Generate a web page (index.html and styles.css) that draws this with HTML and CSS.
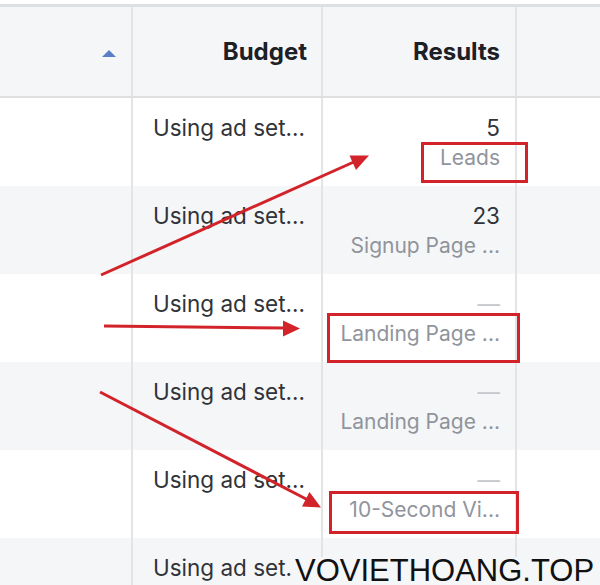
FILE: index.html
```html
<!DOCTYPE html>
<html lang="en">
  <head>
    <meta charset="UTF-8" />
    <meta name="viewport" content="width=device-width, initial-scale=1.0" />
    <title>Ad Sets - Results</title>
    <link rel="stylesheet" href="styles.css">
  </head>
  <body>
    <div class="page">
      <div class="table">
        <div class="row head">
          <div class="cell name"><span class="sort-up"></span></div>
          <div class="cell budget">Budget</div>
          <div class="cell results">Results</div>
          <div class="cell extra"></div>
        </div>

        <div class="row">
          <div class="cell name"></div>
          <div class="cell budget">Using ad set...</div>
          <div class="cell results">
            <div class="value">5</div>
            <div class="type">Leads</div>
          </div>
          <div class="cell extra"></div>
        </div>
        <div class="row alt">
          <div class="cell name"></div>
          <div class="cell budget">Using ad set...</div>
          <div class="cell results">
            <div class="value">23</div>
            <div class="type">Signup Page ...</div>
          </div>
          <div class="cell extra"></div>
        </div>
        <div class="row">
          <div class="cell name"></div>
          <div class="cell budget">Using ad set...</div>
          <div class="cell results">
            <div class="value empty">—</div>
            <div class="type">Landing Page ...</div>
          </div>
          <div class="cell extra"></div>
        </div>
        <div class="row alt">
          <div class="cell name"></div>
          <div class="cell budget">Using ad set...</div>
          <div class="cell results">
            <div class="value empty">—</div>
            <div class="type">Landing Page ...</div>
          </div>
          <div class="cell extra"></div>
        </div>
        <div class="row">
          <div class="cell name"></div>
          <div class="cell budget">Using ad set...</div>
          <div class="cell results">
            <div class="value empty">—</div>
            <div class="type">10-Second Vi...</div>
          </div>
          <div class="cell extra"></div>
        </div>
        <div class="row alt">
          <div class="cell name"></div>
          <div class="cell budget">Using ad set.</div>
          <div class="cell results"></div>
          <div class="cell extra"></div>
        </div>
      </div>

      <!-- annotations drawn on top of the screenshot -->
      <svg class="marks" width="600" height="585" viewBox="0 0 600 585">
        <g stroke="#d2232a" stroke-width="3" fill="none">
          <line x1="101" y1="275" x2="356" y2="161" />
          <line x1="104" y1="326" x2="285" y2="328" />
          <line x1="100" y1="392" x2="308" y2="500" />
          <rect x="422.5" y="143.5" width="104" height="38" />
          <rect x="328.5" y="314.5" width="190" height="47" />
          <rect x="330.5" y="492.5" width="187" height="40" />
        </g>
        <g fill="#d2232a">
          <polygon points="369,155.5 356,170 349.5,155.5" />
          <polygon points="300,328.5 283,320.5 283,336.5" />
          <polygon points="321,507.5 302,506.5 309.5,492" />
        </g>
      </svg>

      <div class="watermark">VOVIETHOANG.TOP</div>
    </div>
  </body>
</html>
```

FILE: styles.css
```css
body {
  margin: 0;
  padding: 0;
  background-color: #fff;
  font-family: Inter, "Liberation Sans", Arial, sans-serif;
  color: #303338;
}

.page {
  position: relative;
  width: 600px;
  height: 585px;
  overflow: hidden;
  padding-top: 4px;
  box-sizing: border-box;
}

.table {
  border-top: 3px solid #dedfe1;
}

.row {
  display: grid;
  grid-template-columns: 131px 190px 194px 1fr;
  height: 88px;
  background-color: #fff;
}

.row.alt {
  background-color: #f5f6f7;
}

.row.head {
  height: 89px;
  background-color: #f5f6f8;
  border-bottom: 2px solid #dedfe1;
}

.cell {
  font-size: 22.5px;
  line-height: 30px;
}

.cell + .cell {
  border-left: 2px solid #e3e4e6;
}

/* header */
.head .cell {
  display: flex;
  align-items: center;
  justify-content: flex-end;
  padding-bottom: 14px;
  box-sizing: border-box;
  font-weight: 700;
  font-size: 24px;
  color: #1d2025;
}

.head .name {
  padding-right: 15px;
  padding-bottom: 0;
}

.sort-up {
  width: 0;
  height: 0;
  border-left: 7px solid transparent;
  border-right: 7px solid transparent;
  border-bottom: 7px solid #5a7fc6;
  margin-top: 3px;
}

.head .budget {
  padding-right: 14px;
}

.head .results {
  padding-right: 15px;
}

/* body cells */
.budget {
  padding: 15px 0 0 20px;
}

.results {
  padding: 15px 15px 0 0;
  text-align: right;
}

.value.empty {
  color: #c4c7cc;
}

.type {
  font-size: 21px;
  color: #90949c;
}

.marks {
  position: absolute;
  left: 0;
  top: 0;
  pointer-events: none;
}

.watermark {
  position: absolute;
  left: 295px;
  top: 557px;
  padding-right: 2px;
  font-family: "Liberation Sans", Arial, sans-serif;
  font-size: 31px;
  line-height: 28px;
  color: #111;
  background-color: #f5f6f7;
}
```
